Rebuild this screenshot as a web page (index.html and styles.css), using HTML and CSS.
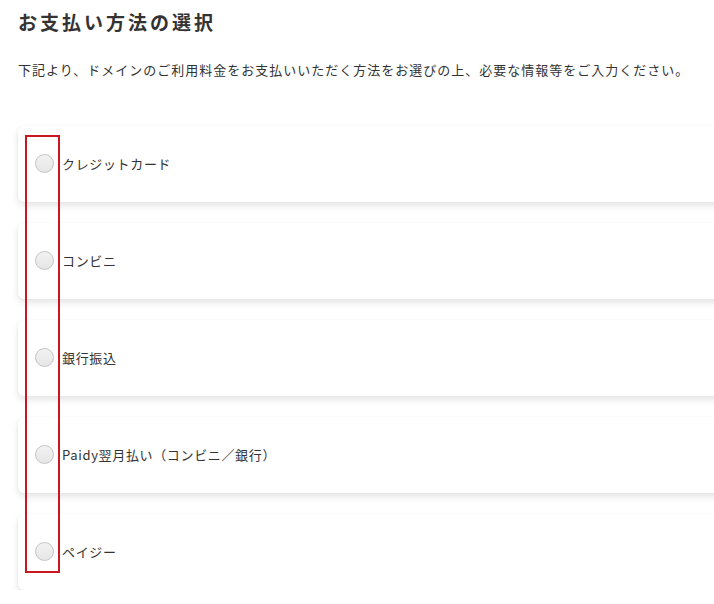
FILE: index.html
```html
<!DOCTYPE html>
<html lang="ja">
<head>
<meta charset="utf-8">
<link rel="stylesheet" href="styles.css">
</head>
<body>
<main class="page">
  <h1 class="title">お支払い方法の選択</h1>
  <p class="lead">下記より、ドメインのご利用料金をお支払いいただく方法をお選びの上、必要な情報等をご入力ください。</p>
  <div class="methods">
    <label class="card"><span class="radio"></span><span class="label">クレジットカード</span></label>
    <label class="card"><span class="radio"></span><span class="label">コンビニ</span></label>
    <label class="card"><span class="radio"></span><span class="label">銀行振込</span></label>
    <label class="card"><span class="radio"></span><span class="label">Paidy翌月払い（コンビニ／銀行）</span></label>
    <label class="card"><span class="radio"></span><span class="label">ペイジー</span></label>
    <div class="highlight"></div>
  </div>
</main>
</body>
</html>
```
FILE: styles.css
```css
html, body {
  margin: 0;
  padding: 0;
  background: #fff;
  overflow: hidden;
}
body {
  font-family: "Noto Sans CJK JP", "Noto Sans", sans-serif;
  color: #333;
}
.page {
  padding: 8px 0 0 18px;
}
.title {
  margin: 0;
  font-size: 19px;
  line-height: 28px;
  font-weight: 700;
  letter-spacing: 3px;
  color: #333;
}
.lead {
  margin: 24px 0 0;
  font-size: 13px;
  line-height: 20px;
  letter-spacing: 1px;
  color: #333;
}
.methods {
  position: relative;
  margin-top: 46px;
  width: 720px;
  display: flex;
  flex-direction: column;
  gap: 21px;
}
.card {
  height: 76px;
  padding-bottom: 2px;
  box-sizing: border-box;
  display: flex;
  align-items: center;
  background: #fff;
  border-radius: 6px;
  box-shadow: 0 4px 7px rgba(0, 0, 0, 0.10), -1px 0 2px rgba(0, 0, 0, 0.03);
}
.radio {
  width: 17px;
  height: 17px;
  margin-left: 17px;
  border: 1px solid #c4c4c4;
  border-radius: 50%;
  background: linear-gradient(#f2f2f2, #e6e6e6);
  flex: none;
}
.label {
  margin-left: 8px;
  font-size: 13px;
  letter-spacing: 0.65px;
  color: #333;
}
.highlight {
  position: absolute;
  left: 7px;
  top: 9px;
  width: 31px;
  height: 434px;
  border: 2px solid #c8171e;
}
```
